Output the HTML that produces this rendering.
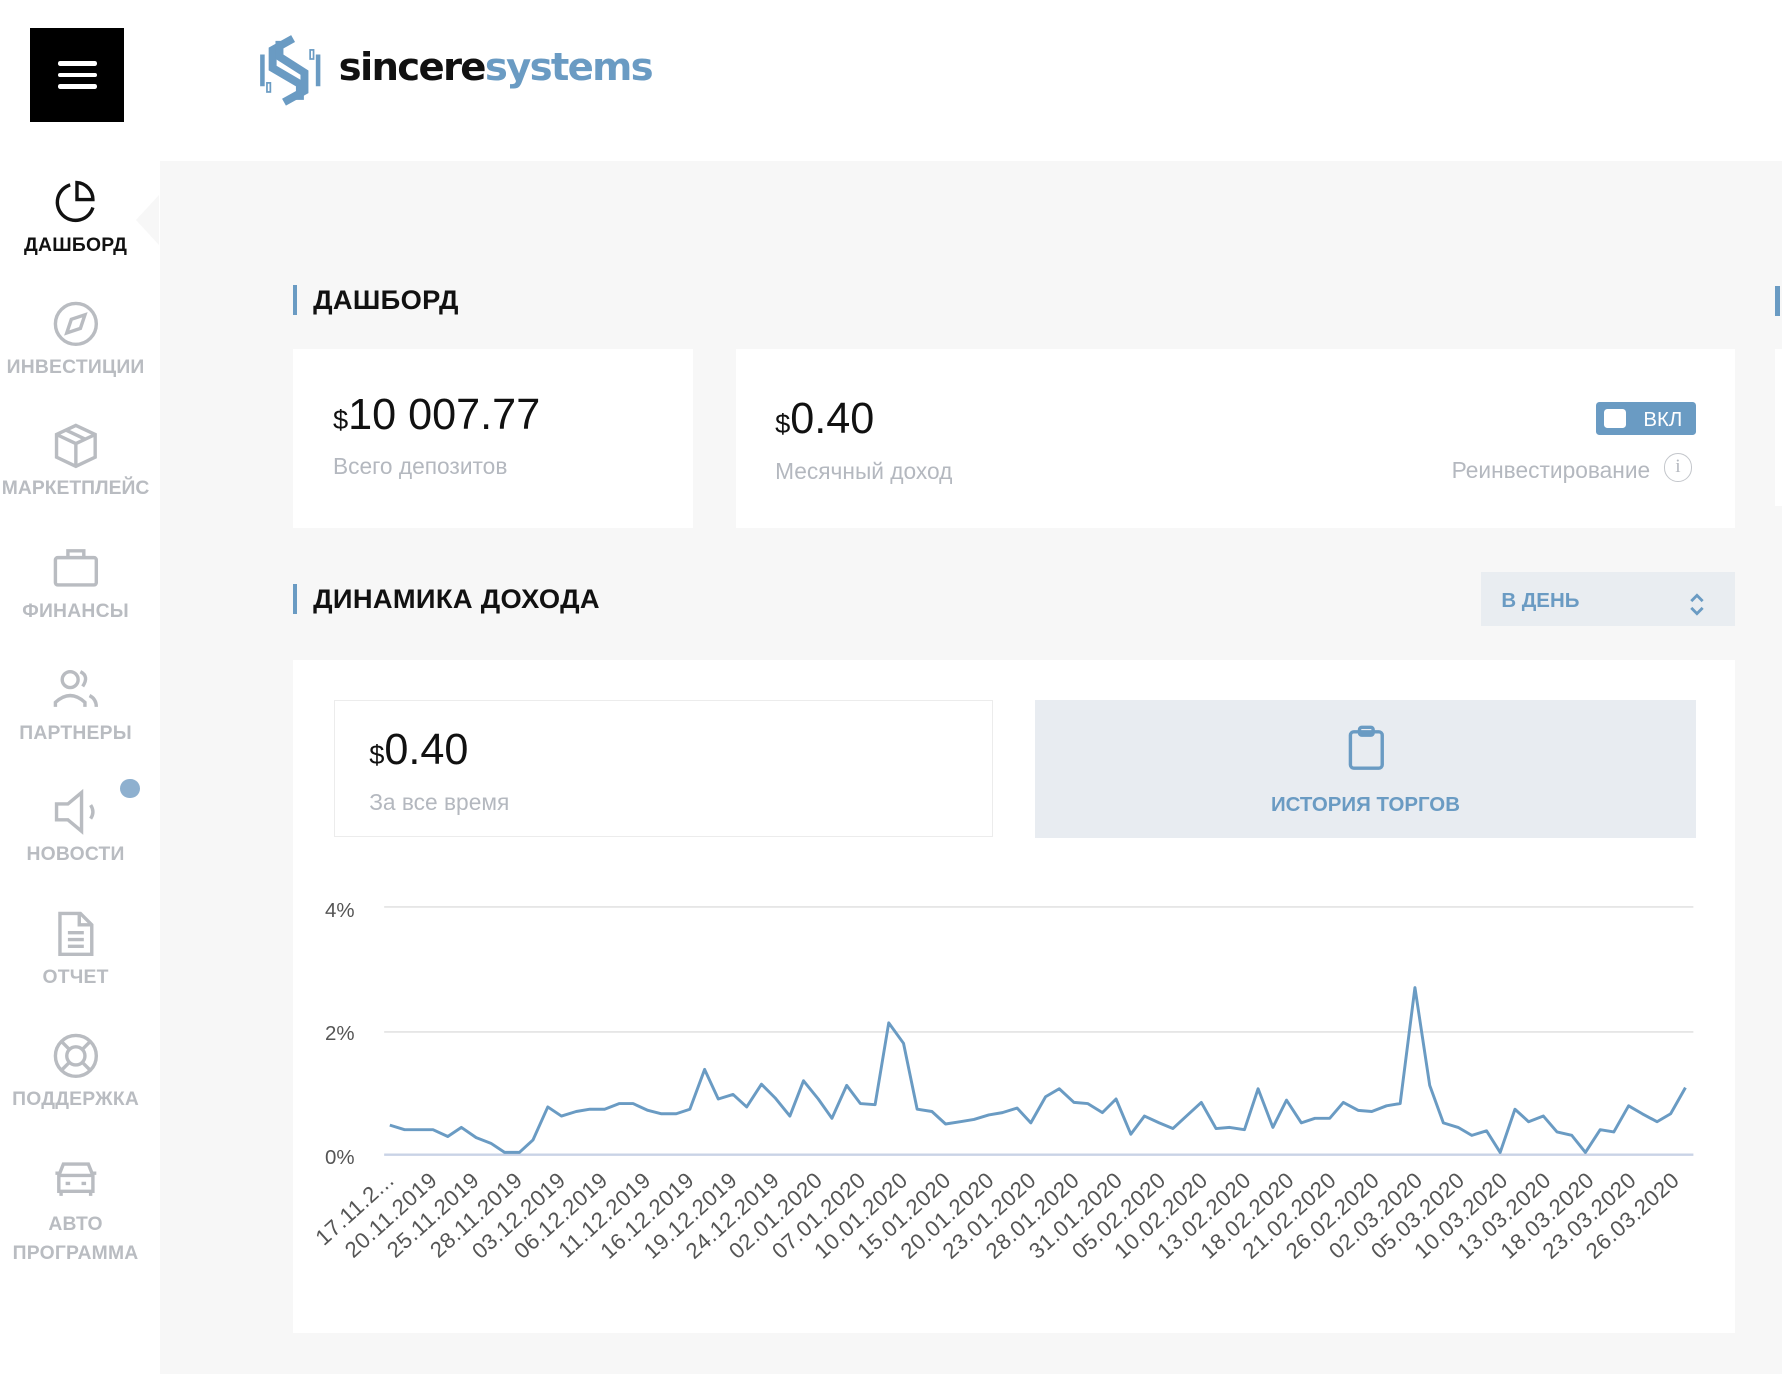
<!DOCTYPE html>
<html><head><meta charset="utf-8">
<style>
html,body{margin:0;padding:0;background:#fff;overflow:hidden}
body{zoom:1.1365;width:1568px;height:1209px;position:relative;font-family:"Liberation Sans",Arial,sans-serif}
.abs{position:absolute}
.side{position:absolute;left:0;width:133px;text-align:center;font-weight:bold;font-size:17px;color:#b9bcc1;letter-spacing:.2px}
.side svg{display:block;margin:0 auto 8px}
.title{position:absolute;font-weight:bold;font-size:24px;color:#111;padding-left:14px;border-left:4px solid #6a9bc3;line-height:26px;letter-spacing:.3px}
.card{position:absolute;background:#fff}
.big{font-size:38px;color:#111}
.big small{font-size:24px}
.sub{font-size:20px;color:#b4b8bf}
</style></head><body>
<div class="abs" style="left:26px;top:25px;width:83px;height:82px;background:#000">
 <div class="abs" style="left:25px;top:29px;width:34px;height:4px;background:#fff;border-radius:2px"></div>
 <div class="abs" style="left:25px;top:39px;width:34px;height:4px;background:#fff;border-radius:2px"></div>
 <div class="abs" style="left:25px;top:49px;width:34px;height:4px;background:#fff;border-radius:2px"></div>
</div>
<svg class="abs" style="left:228px;top:30px" width="56" height="64" viewBox="0 0 56 64">
 <path d="M30 4 L12 14 L12 30 L36 44 L36 58" stroke="#6a9bc3" stroke-width="7" fill="none"/>
 <path d="M22 60 L40 50 L40 34 L18 20 L18 6" stroke="#6a9bc3" stroke-width="7" fill="none"/>
 <path d="M3 18 L3 46 M52 18 L52 46" stroke="#6a9bc3" stroke-width="4"/>
 <rect x="45" y="14" width="3" height="8" fill="none" stroke="#6a9bc3" stroke-width="1.5"/>
 <rect x="7" y="43" width="3" height="8" fill="none" stroke="#6a9bc3" stroke-width="1.5"/>
</svg>
<div class="abs" style="left:298px;top:40px;font-size:34px;font-weight:bold;letter-spacing:-1.5px;font-family:'DejaVu Sans','Liberation Sans',sans-serif"><span style="color:#111">sincere</span><span style="color:#6a9bc3">systems</span></div>

<div class="abs" style="left:141px;top:142px;width:1427px;height:1067px;background:#f7f7f7"></div>
<div class="abs" style="left:120px;top:172px;width:0;height:0;border-top:22px solid transparent;border-bottom:22px solid transparent;border-right:21px solid #f7f7f7"></div>

<div class="side" style="top:157px;color:#111">
<svg width="42" height="42" viewBox="0 0 42 42" fill="none" stroke="#111" stroke-width="3"><path d="M16 6 A16 16 0 1 0 36 26"/><path d="M22 4 A15 15 0 0 1 36 19 L22 19 Z"/></svg>ДАШБОРД</div>
<div class="side" style="top:264px"><svg width="42" height="42" viewBox="0 0 42 42" fill="none" stroke="#b9bcc1" stroke-width="3"><circle cx="21" cy="21" r="18"/><path d="M13 29 L17 17 L29 13 L25 25 Z"/></svg>ИНВЕСТИЦИИ</div>
<div class="side" style="top:371px;letter-spacing:0"><svg width="42" height="42" viewBox="0 0 42 42" fill="none" stroke="#b9bcc1" stroke-width="3"><path d="M21 3 L38 11 L38 31 L21 39 L4 31 L4 11 Z M4 11 L21 19 L38 11 M21 19 L21 39 M12 7 L29 15"/></svg>МАРКЕТПЛЕЙС</div>
<div class="side" style="top:479px"><svg width="42" height="42" viewBox="0 0 42 42" fill="none" stroke="#b9bcc1" stroke-width="3"><rect x="3" y="12" width="36" height="24" rx="2"/><path d="M14 12 V6 H28 V12"/></svg>ФИНАНСЫ</div>
<div class="side" style="top:586px"><svg width="42" height="42" viewBox="0 0 42 42" fill="none" stroke="#b9bcc1" stroke-width="3"><circle cx="16" cy="12" r="7"/><path d="M3 36 V32 Q16 20 29 32 V36"/><path d="M25 5 Q33 9 27 18 M33 26 Q39 29 39 36"/></svg>ПАРТНЕРЫ</div>
<div class="abs" style="left:106px;top:685px;width:17px;height:17px;border-radius:50%;background:#8eb0cf"></div>
<div class="side" style="top:693px"><svg width="42" height="42" viewBox="0 0 42 42" fill="none" stroke="#b9bcc1" stroke-width="3"><path d="M4 14 H14 L26 4 V38 L14 28 H4 Z"/><path d="M34 15 Q38 21 34 27"/></svg>НОВОСТИ</div>
<div class="side" style="top:801px"><svg width="42" height="42" viewBox="0 0 42 42" fill="none" stroke="#b9bcc1" stroke-width="3"><path d="M7 3 H25 L35 13 V39 H7 Z"/><path d="M14 20 H28 M14 26 H28 M14 32 H28 M24 3 V13 H35"/></svg>ОТЧЕТ</div>
<div class="side" style="top:908px"><svg width="42" height="42" viewBox="0 0 42 42" fill="none" stroke="#b9bcc1" stroke-width="3"><circle cx="21" cy="21" r="18"/><circle cx="21" cy="21" r="8"/><path d="M9 9 L15 15 M33 9 L27 15 M9 33 L15 27 M33 33 L27 27"/></svg>ПОДДЕРЖКА</div>
<div class="side" style="top:1016px;line-height:25px"><svg width="42" height="42" viewBox="0 0 42 42" fill="none" stroke="#b9bcc1" stroke-width="3"><path d="M6 18 L10 8 H32 L36 18 V32 H6 Z M6 18 H36 M3 16 H6 M36 16 H39 M12 25 H16 M26 25 H30 M8 32 V36 M34 32 V36"/></svg>АВТО<br>ПРОГРАММА</div>

<div class="title" style="left:258px;top:251px">ДАШБОРД</div>
<div class="abs" style="left:1562px;top:252px;width:4px;height:26px;background:#6a9bc3"></div>
<div class="abs" style="left:1562px;top:307px;width:6px;height:138px;background:#fff"></div>

<div class="card" style="left:258px;top:307px;width:352px;height:158px">
 <div class="abs big" style="left:35px;top:37px"><small>$</small>10 007.77</div>
 <div class="abs sub" style="left:35px;top:92px">Всего депозитов</div>
</div>
<div class="card" style="left:648px;top:307px;width:879px;height:158px">
 <div class="abs big" style="left:34px;top:41px"><small>$</small>0.40</div>
 <div class="abs sub" style="left:34px;top:96px">Месячный доход</div>
 <div class="abs" style="left:756px;top:47px;width:88px;height:29px;background:#6a9bc3;border-radius:3px">
  <div class="abs" style="left:7px;top:6px;width:20px;height:17px;background:#fff;border-radius:3px"></div>
  <div class="abs" style="left:42px;top:5px;color:#fff;font-size:18px">ВКЛ</div>
 </div>
 <div class="abs sub" style="right:75px;top:95px">Реинвестирование</div>
 <div class="abs" style="left:816px;top:92px;width:23px;height:23px;border:1.5px solid #c3c6cb;border-radius:50%;color:#b4b8bf;font-family:'Liberation Serif',serif;font-size:17px;text-align:center;line-height:23px">i</div>
</div>

<div class="title" style="left:258px;top:514px">ДИНАМИКА ДОХОДА</div>
<div class="abs" style="left:1303px;top:503px;width:224px;height:48px;background:#e9edf1">
 <div class="abs" style="left:18px;top:15px;color:#6a9bc3;font-weight:bold;font-size:18px">В ДЕНЬ</div>
 <svg class="abs" style="left:183px;top:18px" width="14" height="22" viewBox="0 0 14 22" fill="none" stroke="#6a9bc3" stroke-width="2.5"><path d="M2 8 L7 3 L12 8 M2 14 L7 19 L12 14"/></svg>
</div>

<div class="card" style="left:258px;top:581px;width:1269px;height:592px">
 <div class="abs" style="left:36px;top:35px;width:578px;height:119px;border:1px solid #ececec">
  <div class="abs big" style="left:30px;top:22px"><small>$</small>0.40</div>
  <div class="abs sub" style="left:30px;top:77px">За все время</div>
 </div>
 <div class="abs" style="left:653px;top:35px;width:581px;height:121px;background:#e8ecf1">
  <svg class="abs" style="left:274px;top:22px" width="34" height="40" viewBox="0 0 34 40" fill="none" stroke="#6a9bc3" stroke-width="3"><rect x="3" y="6" width="28" height="32" rx="3"/><rect x="11" y="2" width="12" height="7" rx="2"/></svg>
  <div class="abs" style="left:0;width:581px;top:82px;text-align:center;color:#6a9bc3;font-weight:bold;font-size:18px">ИСТОРИЯ ТОРГОВ</div>
 </div>
</div>

<svg class="abs" style="left:0;top:0" width="1568" height="1209">
 <g font-family="Liberation Sans, sans-serif" font-size="18" fill="#555">
  <text x="286" y="807">4%</text><text x="286" y="915">2%</text><text x="286" y="1024">0%</text>
 </g>
 <line x1="338" y1="798" x2="1490" y2="798" stroke="#e3e3e3" stroke-width="1.5"/>
 <line x1="338" y1="908" x2="1490" y2="908" stroke="#e3e3e3" stroke-width="1.5"/>
 <line x1="338" y1="1016" x2="1490" y2="1016" stroke="#c9d3e6" stroke-width="2"/>
 <polyline fill="none" stroke="#6a9bc3" stroke-width="2.6" stroke-linejoin="round" points="343,990 356,994 381,994 394,1000 406,992 419,1001 432,1006 444,1014 457,1014 469,1003 482,974 494,982 507,978 519,976 532,976 545,971 557,971 570,977 582,980 595,980 607,976 620,941 632,967 645,963 657,974 670,954 682,966 695,982 707,951 720,967 732,984 745,955 757,971 770,972 782,900 795,918 807,976 820,978 832,989 845,987 857,985 870,981 882,979 895,975 907,988 920,965 932,958 945,970 957,971 970,979 982,967 995,998 1007,982 1020,988 1032,993 1045,981 1057,970 1070,993 1082,992 1095,994 1107,958 1120,992 1132,968 1145,988 1157,984 1170,984 1182,970 1195,977 1207,978 1220,973 1232,971 1245,869 1258,955 1270,988 1283,992 1295,999 1308,995 1320,1014 1333,976 1345,987 1358,982 1370,996 1383,999 1395,1014 1408,994 1420,996 1433,973 1445,980 1458,987 1470,980 1483,957"/>
 <g font-family="Liberation Sans, sans-serif" font-size="19.5" fill="#555" text-anchor="end" letter-spacing="0.5">
  <text transform="translate(348,1040) rotate(-42)">17.11.2...</text>
  <text transform="translate(386,1040) rotate(-42)">20.11.2019</text>
  <text transform="translate(423,1040) rotate(-42)">25.11.2019</text>
  <text transform="translate(461,1040) rotate(-42)">28.11.2019</text>
  <text transform="translate(499,1040) rotate(-42)">03.12.2019</text>
  <text transform="translate(536,1040) rotate(-42)">06.12.2019</text>
  <text transform="translate(574,1040) rotate(-42)">11.12.2019</text>
  <text transform="translate(612,1040) rotate(-42)">16.12.2019</text>
  <text transform="translate(650,1040) rotate(-42)">19.12.2019</text>
  <text transform="translate(687,1040) rotate(-42)">24.12.2019</text>
  <text transform="translate(725,1040) rotate(-42)">02.01.2020</text>
  <text transform="translate(763,1040) rotate(-42)">07.01.2020</text>
  <text transform="translate(800,1040) rotate(-42)">10.01.2020</text>
  <text transform="translate(838,1040) rotate(-42)">15.01.2020</text>
  <text transform="translate(876,1040) rotate(-42)">20.01.2020</text>
  <text transform="translate(913,1040) rotate(-42)">23.01.2020</text>
  <text transform="translate(951,1040) rotate(-42)">28.01.2020</text>
  <text transform="translate(989,1040) rotate(-42)">31.01.2020</text>
  <text transform="translate(1027,1040) rotate(-42)">05.02.2020</text>
  <text transform="translate(1064,1040) rotate(-42)">10.02.2020</text>
  <text transform="translate(1102,1040) rotate(-42)">13.02.2020</text>
  <text transform="translate(1140,1040) rotate(-42)">18.02.2020</text>
  <text transform="translate(1177,1040) rotate(-42)">21.02.2020</text>
  <text transform="translate(1215,1040) rotate(-42)">26.02.2020</text>
  <text transform="translate(1253,1040) rotate(-42)">02.03.2020</text>
  <text transform="translate(1290,1040) rotate(-42)">05.03.2020</text>
  <text transform="translate(1328,1040) rotate(-42)">10.03.2020</text>
  <text transform="translate(1366,1040) rotate(-42)">13.03.2020</text>
  <text transform="translate(1404,1040) rotate(-42)">18.03.2020</text>
  <text transform="translate(1441,1040) rotate(-42)">23.03.2020</text>
  <text transform="translate(1479,1040) rotate(-42)">26.03.2020</text>
 </g>
</svg>
</body></html>
